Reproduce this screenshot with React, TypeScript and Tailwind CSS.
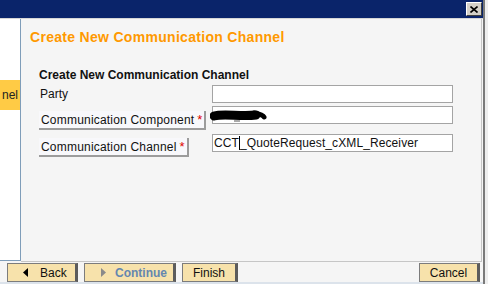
import React from 'react';

const font = { fontFamily: '"Liberation Sans", Arial, sans-serif' };

function LabelButton({ text }: { text: string }) {
  return (
    <div className="inline-flex h-[19px] items-center whitespace-nowrap border-b-2 border-r-2 border-[#9c9c9c] bg-[#f8f8fb] pl-[2px] pr-[2px] pt-[1px]">
      <span className="text-[12px] leading-[14px] tracking-[0.2px] text-[#111]">{text}</span>
      <span className="ml-[3px] text-[13px] leading-[14px] text-[#e00000]">*</span>
    </div>
  );
}

function FooterButton({ className, children }: { className?: string; children: React.ReactNode }) {
  return (
    <div
      className={
        'flex h-[19px] items-center whitespace-nowrap border border-[#7c7c7c] border-r-[3px] border-r-[#5c5c5c] bg-[#f7e2ab] text-[12px] leading-[14px] ' +
        (className ?? '')
      }
    >
      {children}
    </div>
  );
}

export default function App() {
  return (
    <div className="flex h-[284px] w-[488px] overflow-hidden bg-[#f5f5f5]" style={font}>
      {/* window */}
      <div className="flex w-[483px] flex-col">
        {/* title bar */}
        <div className="flex h-[18px] shrink-0 items-start justify-end bg-[#0a246a] pr-[1px] pt-[2px]">
          <div className="flex h-[14px] w-[16px] items-center justify-center border border-t-white border-l-white border-r-[#404040] border-b-[#404040] bg-[#d4d0c8]">
            <svg width="8" height="7" viewBox="0 0 8 7">
              <path d="M0.5 0.5 L7.5 6.5 M7.5 0.5 L0.5 6.5" stroke="#000" strokeWidth="1.6" />
            </svg>
          </div>
        </div>
        <div className="h-[1px] shrink-0 bg-[#d6d6d6]" />

        {/* body */}
        <div className="flex h-[243px] w-[482px] shrink-0 border-r border-[#c6c6c6]">
          {/* left navigation */}
          <div className="flex h-[242px] w-[21px] shrink-0 flex-col border-b border-r border-[#7f9db9] bg-white">
            <div className="mt-[61px] flex h-[30px] items-center justify-end bg-[#ffcb45] pr-[2px]">
              <span className="text-[12px] leading-[14px] text-[#222]">nel</span>
            </div>
          </div>

          {/* content */}
          <div className="flex flex-1 flex-col border-b border-[#c6c6c6]">
            <div className="whitespace-nowrap pl-[9px] pt-[10px] text-[14px] font-bold leading-[16px] tracking-[0.3px] text-[#ff9900]">
              Create New Communication Channel
            </div>

            <div className="pl-[18px]">
              <div className="mt-[23px] whitespace-nowrap text-[12px] font-bold leading-[14px] text-[#111]">
                Create New Communication Channel
              </div>

              <div className="mt-[3px] grid grid-cols-[173px_241px]">
                <div className="flex h-[18px] items-center pl-[1px] text-[12px] leading-[14px] text-[#111]">Party</div>
                <div className="h-[18px] border border-[#a4a4a4] bg-white" />

                <div className="mt-[3px] pt-[1px]">
                  <LabelButton text="Communication Component" />
                </div>
                <div className="relative mt-[3px] h-[18px] border border-[#a4a4a4] bg-white">
                  <svg className="absolute left-[-3px] top-[2px]" width="58" height="14" viewBox="0 0 58 14">
                    <path d="M4 7 C14 4 30 8 46 6" stroke="#000" strokeWidth="9" strokeLinecap="round" fill="none" />
                    <path d="M44 4 C50 5 53 6 54 8" stroke="#000" strokeWidth="5" strokeLinecap="round" fill="none" />
                    <path d="M24 12 L30 12" stroke="#555" strokeWidth="1" />
                  </svg>
                </div>

                <div className="mt-[3px]">
                  <LabelButton text="Communication Channel" />
                </div>
                <div className="mt-[3px] flex h-[18px] items-center whitespace-nowrap border border-[#a4a4a4] bg-white pl-[1px]">
                  <span className="text-[12px] leading-[14px] tracking-[0.1px] text-[#111]">CCT</span>
                  <span className="h-[14px] w-[1px] bg-black" />
                  <span className="text-[12px] leading-[14px] tracking-[0.1px] text-[#111]">_QuoteRequest_cXML_Receiver</span>
                </div>
              </div>
            </div>
          </div>
        </div>

        {/* footer */}
        <div className="flex flex-1 flex-col">
          <div className="flex items-start pl-[7px] pr-[3px] pt-[1px]">
            <FooterButton className="w-[71px] pl-[15px] text-[#111]">
              <svg width="5" height="9" viewBox="0 0 5 9">
                <path d="M5 0 L0 4.5 L5 9 Z" fill="#000" />
              </svg>
              <span className="ml-[12px]">Back</span>
            </FooterButton>
            <FooterButton className="ml-[6px] w-[92px] pl-[16px]">
              <svg width="5" height="9" viewBox="0 0 5 9">
                <path d="M0 0 L5 4.5 L0 9 Z" fill="#8a8a8a" />
              </svg>
              <span className="ml-[9px] font-bold text-[#6587b0]">Continue</span>
            </FooterButton>
            <FooterButton className="ml-[6px] w-[56px] justify-center text-[#111]">
              <span>Finish</span>
            </FooterButton>
            <FooterButton className="ml-auto w-[61px] justify-center text-[#111]">
              <span>Cancel</span>
            </FooterButton>
          </div>
          <div className="mt-auto h-[3px] bg-[#dce3eb]" />
        </div>
      </div>

      {/* window edge */}
      <div className="w-[5px] border-l-2 border-[#7a7a7a] bg-[#eeeeee]" />
    </div>
  );
}
